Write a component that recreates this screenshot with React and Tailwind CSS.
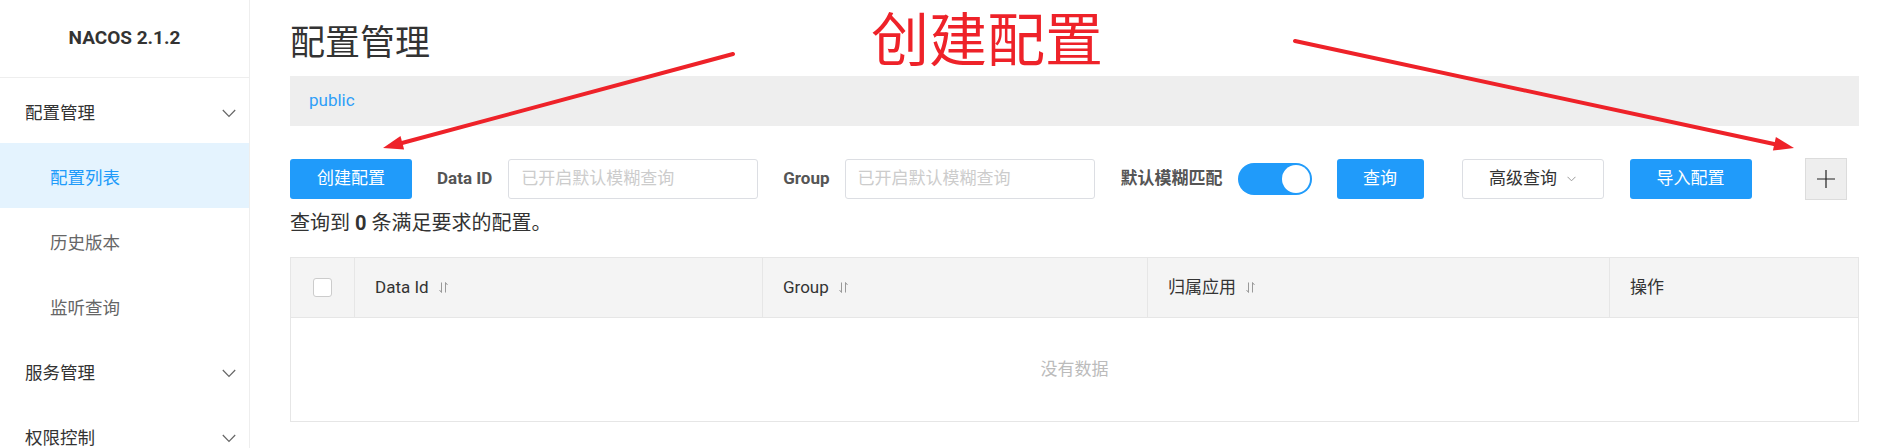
const font = { fontFamily: 'Roboto, "Noto Sans CJK SC", sans-serif' };

const SortIcon = () => (
  <svg width="9" height="11" viewBox="0 0 9 11" className="ml-[10px] text-[#999]" fill="none" stroke="currentColor" strokeWidth="1">
    <path d="M2.5 0.5v10M2.5 10.5L0.5 8" />
    <path d="M6.5 10.5v-10M6.5 0.5L8.5 3" />
  </svg>
);

const Chevron = ({ className }) => (
  <svg width="14" height="9" viewBox="0 0 14 9" fill="none" stroke="currentColor" strokeWidth="1.2" className={className}>
    <path d="M0.8 1L7 7.5L13.2 1" />
  </svg>
);

const MenuGroup = ({ label }) => (
  <div className="h-[65px] shrink-0 flex items-center justify-between pt-[5px] pl-[25px] pr-[13px] text-[#333]">
    <span>{label}</span>
    <Chevron className="text-[#666]" />
  </div>
);

const MenuItem = ({ label, active }) => (
  <div
    className={
      active
        ? "h-[65px] shrink-0 flex items-center pt-[5px] pl-[50px] bg-[#e4f3fe] text-[#209bfa]"
        : "h-[65px] shrink-0 flex items-center pt-[5px] pl-[50px] text-[#666]"
    }
  >
    {label}
  </div>
);

const Sidebar = () => (
  <div className="w-[250px] shrink-0 h-full border-r border-[#eee] flex flex-col bg-white text-[17.5px]">
    <div className="h-[78px] shrink-0 border-b border-[#eee] flex items-center justify-center font-bold text-[19px] text-[#333]">
      NACOS 2.1.2
    </div>
    <MenuGroup label="配置管理" />
    <MenuItem label="配置列表" active />
    <MenuItem label="历史版本" />
    <MenuItem label="监听查询" />
    <MenuGroup label="服务管理" />
    <MenuGroup label="权限控制" />
  </div>
);

const Toolbar = () => (
  <div className="mt-[33px] h-[40px] flex items-center">
    <button className="w-[122px] h-[40px] rounded-[3px] bg-[#209bfa] text-white">创建配置</button>
    <span className="ml-[25px] font-bold text-[#555]">Data ID</span>
    <div className="ml-[16px] w-[250px] h-[40px] border border-[#dcdee3] rounded-[3px] flex items-center px-[12px] text-[#ccc]">
      已开启默认模糊查询
    </div>
    <span className="ml-[25px] font-bold text-[#555]">Group</span>
    <div className="ml-[15px] w-[250px] h-[40px] border border-[#dcdee3] rounded-[3px] flex items-center px-[12px] text-[#ccc]">
      已开启默认模糊查询
    </div>
    <span className="ml-[26px] font-bold text-[#555]">默认模糊匹配</span>
    <div className="ml-[15px] w-[74px] h-[32px] rounded-full bg-[#209bfa] flex items-center justify-end px-[2px]">
      <div className="w-[28px] h-[28px] rounded-full bg-white" />
    </div>
    <button className="ml-[25px] w-[87px] h-[40px] rounded-[3px] bg-[#209bfa] text-white">查询</button>
    <button className="ml-[38px] w-[142px] h-[40px] rounded-[3px] border border-[#dcdee3] bg-white text-[#333] flex items-center justify-center">
      高级查询
      <svg width="9" height="6" viewBox="0 0 9 6" fill="none" stroke="#999" strokeWidth="1" className="ml-[10px]">
        <path d="M0.5 0.8L4.5 4.8L8.5 0.8" />
      </svg>
    </button>
    <button className="ml-[26px] w-[122px] h-[40px] rounded-[3px] bg-[#209bfa] text-white">导入配置</button>
    <button className="ml-[53px] w-[42px] h-[42px] border border-[#dcdcdc] bg-[#eeeeee] flex items-center justify-center">
      <svg width="20" height="20" viewBox="0 0 20 20" stroke="#222" strokeWidth="1.2">
        <path d="M10 1v18M1 10h18" />
      </svg>
    </button>
  </div>
);

const Table = () => (
  <div className="mt-[22px] border border-[#e6e6e6]">
    <div className="h-[60px] bg-[#f4f4f4] border-b border-[#e6e6e6] grid grid-cols-[64px_408px_385px_462px_1fr] text-[#333]">
      <div className="flex items-center justify-center border-r border-[#e6e6e6]">
        <div className="w-[19px] h-[19px] rounded-[3px] border border-[#ccc] bg-white" />
      </div>
      <div className="flex items-center pl-[20px] border-r border-[#e6e6e6]">
        Data Id
        <SortIcon />
      </div>
      <div className="flex items-center pl-[20px] border-r border-[#e6e6e6]">
        Group
        <SortIcon />
      </div>
      <div className="flex items-center pl-[20px] border-r border-[#e6e6e6]">
        归属应用
        <SortIcon />
      </div>
      <div className="flex items-center pl-[20px]">操作</div>
    </div>
    <div className="h-[103px] flex items-center justify-center text-[#bbb]">没有数据</div>
  </div>
);

export default function App() {
  return (
    <div className="relative w-[1892px] h-[448px] overflow-hidden flex bg-white text-[17px]" style={font}>
      <Sidebar />
      <div className="flex-1 pl-[40px] pr-[33px]">
        <h1 className="pt-[20px] text-[35px] leading-[48px] text-[#333]">配置管理</h1>
        <div className="mt-[8px] h-[50px] bg-[#eeeeee] flex items-center px-[19px] text-[#2f9ef8]">public</div>
        <Toolbar />
        <div className="mt-[12px] leading-[24px] text-[20px] text-[#333]">
          查询到 <span className="font-bold">0</span> 条满足要求的配置。
        </div>
        <Table />
      </div>

      <div className="absolute left-[871px] top-[6px] text-[58px] leading-[70px] text-[#ee2229]">创建配置</div>
      <svg className="absolute left-0 top-0 pointer-events-none" width="1892" height="448">
        <g stroke="#ee2229" strokeWidth="4" strokeLinecap="round" fill="#ee2229">
          <line x1="733" y1="54" x2="402" y2="143" />
          <polygon points="383,148 400.5,136 404.1,149.6" stroke="none" />
          <line x1="1295" y1="41" x2="1774" y2="144" />
          <polygon points="1794,148 1772.9,150.6 1775.9,137" stroke="none" />
        </g>
      </svg>
    </div>
  );
}
